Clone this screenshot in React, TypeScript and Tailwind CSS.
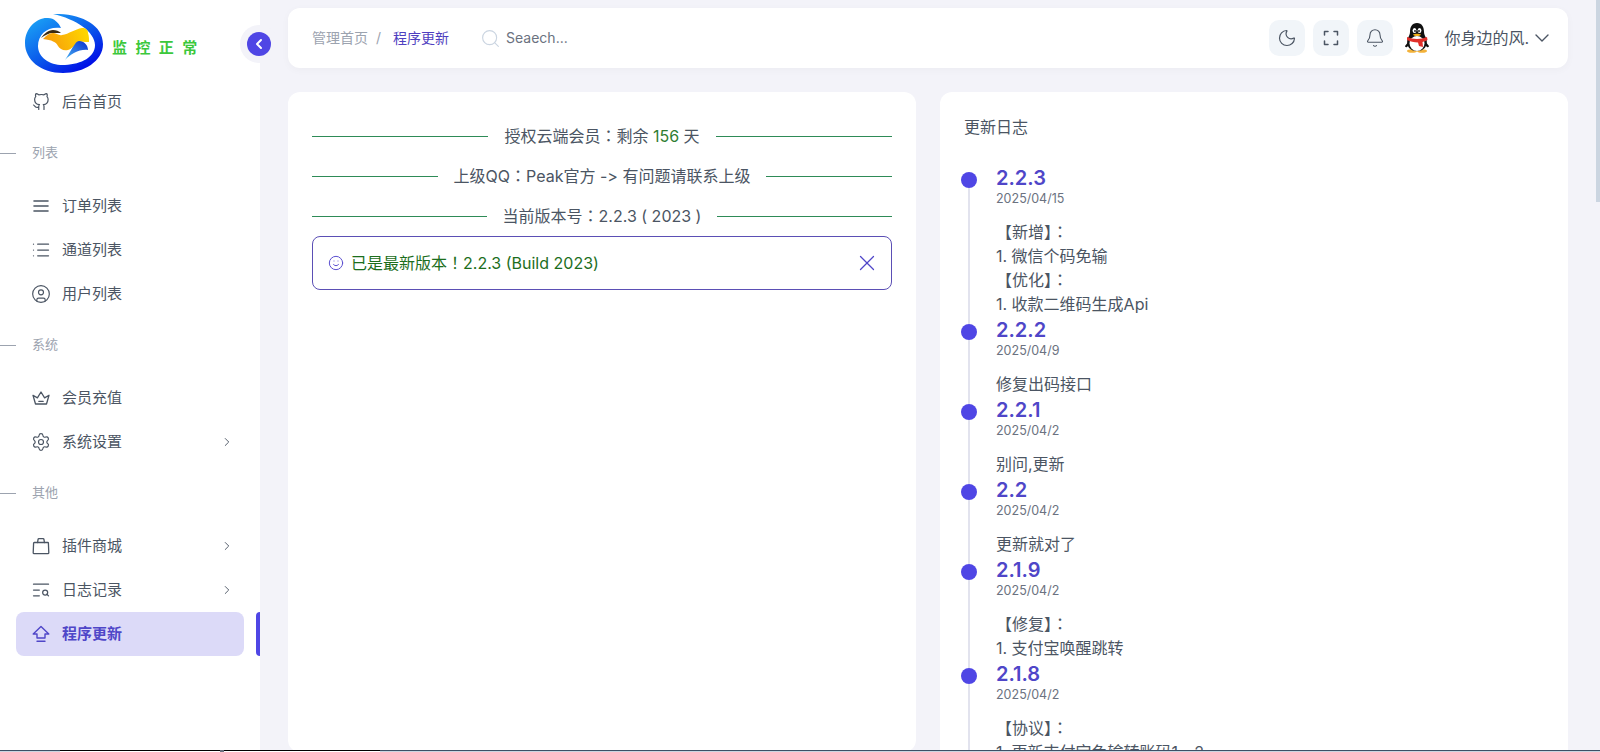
import {
  Bell,
  ChevronDown,
  ChevronLeft,
  ChevronRight,
  CircleUser,
  List,
  Moon,
  Search,
  Settings,
  Smile,
  TextSearch,
  X,
} from "lucide-react";
import type { ReactNode } from "react";

const iconProps = { fill: "none", stroke: "currentColor", strokeWidth: 1.6, strokeLinecap: "round", strokeLinejoin: "round" } as const;

function GithubIcon() {
  return (
    <svg width="18" height="18" viewBox="0 0 24 24" {...iconProps}>
      <path d="M9 19c-5 1.5-5-2.5-7-3m14 6v-3.87a3.37 3.37 0 0 0-.94-2.61c3.14-.35 6.44-1.54 6.44-7A5.44 5.44 0 0 0 20 4.77 5.07 5.07 0 0 0 19.91 1S18.73.65 16 2.48a13.38 13.38 0 0 0-7 0C6.27.65 5.09 1 5.09 1A5.07 5.07 0 0 0 5 4.77a5.44 5.44 0 0 0-1.5 3.78c0 5.42 3.3 6.61 6.44 7A3.37 3.37 0 0 0 9 18.13V22" />
    </svg>
  );
}

function LinesIcon() {
  return (
    <svg width="18" height="18" viewBox="0 0 18 18" {...iconProps}>
      <path d="M2 4h14M2 9h14M2 14h14" />
    </svg>
  );
}

function CrownIcon() {
  return (
    <svg width="18" height="18" viewBox="0 0 18 18" {...iconProps} strokeWidth={1.3}>
      <path d="M3.500 15 1 6.300l4.400 2.600L9 3l3.600 5.900L17 6.300 14.500 15Z" />
      <path d="M6.800 12.300h4.400" />
    </svg>
  );
}

function BagIcon() {
  return (
    <svg width="18" height="18" viewBox="0 0 18 18" {...iconProps} strokeWidth={1.3}>
      <path d="M2.200 5.500h13.600a.6.6 0 0 1 .6.6l.4 9.600a.9.9 0 0 1-.9.9H2.100a.9.9 0 0 1-.9-.9l.4-9.600a.6.6 0 0 1 .6-.6Z" />
      <path d="M5.600 5.500 6 2.600a1 1 0 0 1 1-.9h4a1 1 0 0 1 1 .9l.4 2.900" />
    </svg>
  );
}

function UpdateIcon() {
  return (
    <svg width="18" height="18" viewBox="0 0 18 18" {...iconProps} strokeWidth={1.4}>
      <path d="M9 1.500 1.200 9h3.800v4h8V9h3.800Z" />
      <path d="M5 16.200h8" />
    </svg>
  );
}

function FullscreenIcon() {
  return (
    <svg width="16" height="16" viewBox="0 0 16 16" {...iconProps} strokeWidth={1.5}>
      <path d="M1.500 5V1.500H5M11 1.500h3.500V5M14.500 11v3.500H11M5 14.500H1.500V11" />
    </svg>
  );
}

function Logo() {
  return (
    <svg width="80" height="59" viewBox="0 0 80 59">
      <defs>
        <linearGradient id="logoRing" x1="0.1" y1="0.1" x2="0.8" y2="0.95">
          <stop offset="0" stopColor="#1aa0f5" />
          <stop offset="0.55" stopColor="#0a55ea" />
          <stop offset="1" stopColor="#0008e6" />
        </linearGradient>
        <linearGradient id="logoYellow" x1="0" y1="0.5" x2="1" y2="0.3">
          <stop offset="0" stopColor="#f69a0c" />
          <stop offset="1" stopColor="#ffd800" />
        </linearGradient>
        <linearGradient id="logoTail" x1="1" y1="0" x2="0" y2="1">
          <stop offset="0" stopColor="#0b2fd0" />
          <stop offset="1" stopColor="#45b4f5" />
        </linearGradient>
      </defs>
      <path
        d="M29 0C55-1 79 10 79 30 79 47 60 59 39 59 17 59 1 46 1 29 1 13 14 3 24 4c6 0 11 5 13 10C24 12 14 20 14 32c0 12 13 20 27 19 17-1 30-8 30-20C71 18 52 5 29 0Z"
        fill="url(#logoRing)"
      />
      <path d="M17 24c3-4 7-8 12-8 3 0 6 1 8 3-3 0-5 0-8 0-4 0-8 2-12 5Z" fill="#3a2a12" />
      <path
        d="M19 25c3-3 6-6 10-6 3 0 6 3 9 2 7-1 13-6 20-7 4 0 6 2 6 5 1 3 1 6 1 9-4 0-8-1-11 1-4 2-6 6-10 7-5 1-8-1-10-4-2-4-6-6-15-7Z"
        fill="url(#logoYellow)"
      />
      <path d="M55 27c5 0 9 4 9 9-9-1-17 4-23 10 4-6 7-12 10-16 1-2 3-3 4-3Z" fill="url(#logoTail)" />
    </svg>
  );
}

function Penguin() {
  return (
    <svg width="26" height="30" viewBox="0 0 26 30">
      <ellipse cx="8" cy="28" rx="5" ry="1.800" fill="#f3b23a" />
      <ellipse cx="18" cy="28" rx="5" ry="1.800" fill="#f3b23a" />
      <path d="M5 18 1 23c0 1 1 1.500 2 1l3-3ZM21 18l4 5c0 1-1 1.500-2 1l-3-3Z" fill="#111" />
      <path d="M13 0c5 0 7 4 7 9 0 2 1 4 2 6 2 4 1 13-9 13S2 19 4 15c1-2 2-4 2-6 0-5 2-9 7-9Z" fill="#111" />
      <ellipse cx="13" cy="20.500" rx="7.500" ry="7.500" fill="#fff" />
      <ellipse cx="10.500" cy="7.500" rx="1.900" ry="2.600" fill="#fff" />
      <ellipse cx="15.500" cy="7.500" rx="1.900" ry="2.600" fill="#fff" />
      <circle cx="11" cy="8" r="0.900" fill="#111" />
      <circle cx="15" cy="8" r="0.900" fill="#111" />
      <path d="M9 11.500c2-1 6-1 8 0-1 2-7 2-8 0Z" fill="#f6b21a" />
      <path d="M3 14c6 2.500 14 2.500 20 0l.500 3c-2 1-3 1.500-5 2l.500 5-4-1-1-3.500c-4 0-8-1-11-2.500Z" fill="#e0302a" />
    </svg>
  );
}

// full-width punctuation sits centred in the reference, the TC face draws it that way
function Cjk({ text }: { text: string }) {
  return (
    <>
      {text.split(/([：！])/).map((part, i) =>
        i % 2 === 1 ? (
          <span key={i} className="font-['Noto_Sans_CJK_TC',sans-serif] leading-none">
            {part}
          </span>
        ) : (
          part
        ),
      )}
    </>
  );
}

function NavItem({ icon, label, arrow, active }: { icon: ReactNode; label: string; arrow?: boolean; active?: boolean }) {
  return (
    <div className="flex h-11 items-center pl-4">
      <div
        className={`flex h-11 w-[228px] items-center rounded-lg pl-4 pr-[10px] ${
          active ? "bg-[#dcdaf8] text-[#4f46c8] font-semibold" : "text-[#4b5563]"
        }`}
      >
        <span className="flex w-[18px] justify-center">{icon}</span>
        <span className="ml-3 flex-1 text-[15px]">{label}</span>
        {arrow && <ChevronRight size={14} strokeWidth={1.6} className="text-[#4b5563]" />}
      </div>
      {active && <div className="ml-3 h-11 w-1 rounded-l bg-[#4f46e5]" />}
    </div>
  );
}

function NavTitle({ label }: { label: string }) {
  return (
    <div className="mb-[21px] mt-[19px] flex h-5 items-center text-[13px] text-[#9ca3af]">
      <span className="h-px w-4 bg-[#9ca3af]" />
      <span className="ml-4">{label}</span>
    </div>
  );
}

function Divider({ children }: { children: ReactNode }) {
  return (
    <div className="flex h-6 items-center gap-4 text-base leading-6 text-[#4b5563] [font-feature-settings:'calt'_0]">
      <span className="h-px flex-1 bg-[#2e8b57]" />
      <span>{children}</span>
      <span className="h-px flex-1 bg-[#2e8b57]" />
    </div>
  );
}

function TopButton({ children }: { children: ReactNode }) {
  return <div className="flex h-9 w-9 items-center justify-center rounded-[10px] bg-[#f1f5f9] text-[#4b5563]">{children}</div>;
}

const logs = [
  { version: "2.2.3", date: "2025/04/15", body: ["【新增】：", "1. 微信个码免输", "【优化】：", "1. 收款二维码生成Api"] },
  { version: "2.2.2", date: "2025/04/9", body: ["修复出码接口"] },
  { version: "2.2.1", date: "2025/04/2", body: ["别问,更新"] },
  { version: "2.2", date: "2025/04/2", body: ["更新就对了"] },
  { version: "2.1.9", date: "2025/04/2", body: ["【修复】：", "1. 支付宝唤醒跳转"] },
  { version: "2.1.8", date: "2025/04/2", body: ["【协议】：", "1. 更新支付宝免输转账码1、2"] },
];

export default function App() {
  return (
    <div className="relative flex h-[752px] w-[1600px] overflow-hidden bg-[#f3f3f9] font-['Inter','Noto_Sans_CJK_SC',sans-serif]">
      <aside className="relative flex w-[260px] shrink-0 flex-col bg-white">
        <div className="flex h-20 items-start pl-6 pt-3.5">
          <Logo />
          <span className="ml-2 mt-[24px] whitespace-nowrap text-[15px] font-bold leading-5 tracking-[8.4px] text-[#3cc83c]">监控正常</span>
        </div>
        <NavItem icon={<GithubIcon />} label="后台首页" />
        <NavTitle label="列表" />
        <NavItem icon={<LinesIcon />} label="订单列表" />
        <NavItem icon={<List size={20} strokeWidth={1.5} className="shrink-0" />} label="通道列表" />
        <NavItem icon={<CircleUser size={20} strokeWidth={1.4} className="shrink-0" />} label="用户列表" />
        <NavTitle label="系统" />
        <NavItem icon={<CrownIcon />} label="会员充值" />
        <NavItem icon={<Settings size={20} strokeWidth={1.4} className="shrink-0" />} label="系统设置" arrow />
        <NavTitle label="其他" />
        <NavItem icon={<BagIcon />} label="插件商城" arrow />
        <NavItem icon={<TextSearch size={20} strokeWidth={1.5} className="shrink-0" />} label="日志记录" arrow />
        <NavItem icon={<UpdateIcon />} label="程序更新" active />
      </aside>

      {/* collapse toggle sits over the sidebar edge */}
      <div className="absolute left-[240px] top-[25px] flex h-[38px] w-[38px] items-center justify-center rounded-full bg-[#f3f3f9]">
        <div className="flex h-6 w-6 items-center justify-center rounded-full bg-[#4f46e5] text-white">
          <ChevronLeft size={16} strokeWidth={3} />
        </div>
      </div>

      <main className="flex min-w-0 flex-1 flex-col pl-7 pr-8 pt-2">
        <header className="flex h-[60px] shrink-0 items-center rounded-xl bg-white pl-6 pr-[14px] shadow-[0_2px_8px_rgba(15,23,42,0.03)]">
          <span className="text-sm text-[#9ca3af]">管理首页</span>
          <span className="ml-2 text-sm text-[#9ca3af]">/</span>
          <span className="ml-[12px] text-sm text-[#4f3fc0]">程序更新</span>
          <Search size={21} strokeWidth={1.3} className="ml-[31px] text-[#cbd5e1]" />
          <span className="ml-[5px] text-sm text-[#6b7280]">Seaech...</span>
          <div className="ml-auto flex items-center gap-2">
            <TopButton>
              <Moon size={20} strokeWidth={1.4} />
            </TopButton>
            <TopButton>
              <FullscreenIcon />
            </TopButton>
            <TopButton>
              <Bell size={20} strokeWidth={1.3} />
            </TopButton>
            <div className="ml-[3px] flex items-center">
              <Penguin />
              <span className="ml-[14px] whitespace-nowrap text-base text-[#4b5563]">你身边的风.</span>
              <ChevronDown size={24} strokeWidth={1.4} className="ml-px text-[#4b5563]" />
            </div>
          </div>
        </header>

        <div className="mt-6 flex min-h-0 flex-1 gap-6">
          <section className="w-[628px] shrink-0 rounded-xl bg-white px-6 pt-8">
            <div className="flex flex-col gap-4">
              <Divider>
                <Cjk text="授权云端会员：剩余 " />
                <span className="text-[#2f7d32]">156</span> 天
              </Divider>
              <Divider>
                <Cjk text="上级QQ：Peak官方 -> 有问题请联系上级" />
              </Divider>
              <Divider>
                <Cjk text="当前版本号：2.2.3 ( 2023 )" />
              </Divider>
            </div>
            <div className="mt-2 flex h-[54px] items-center rounded-lg border border-[#5b4fb5] pl-[15px] pr-[11px]">
              <Smile size={16} strokeWidth={1.5} className="text-[#5b4fd0]" />
              <span className="ml-[7px] flex-1 text-base leading-6 text-[#1c6e1c]">
                <Cjk text="已是最新版本！2.2.3 (Build 2023)" />
              </span>
              <X size={26} strokeWidth={1.2} className="text-[#4f46c8]" />
            </div>
          </section>

          <section className="min-w-0 flex-1 overflow-hidden rounded-t-xl bg-white px-6">
            <h2 className="mt-[25px] text-base font-normal leading-5 text-[#4b5563]">更新日志</h2>
            <div className="-ml-[3px] mt-[27px]">
              {logs.map((log, i) => (
                <div key={log.version} className="flex">
                  <div className="flex w-4 shrink-0 flex-col items-center">
                    <span className={`h-2 w-0.5 ${i === 0 ? "" : "bg-[#e2e3ee]"}`} />
                    <span className="h-4 w-4 rounded-full bg-[#4f46e5]" />
                    <span className="w-0.5 flex-1 bg-[#e2e3ee]" />
                  </div>
                  <div className="ml-[19px]">
                    <div className="text-xl font-semibold leading-7 text-[#4f46c8]">{log.version}</div>
                    <div className="mb-[14px] text-[12.5px] leading-[14px] text-[#6b7280]">{log.date}</div>
                    {log.body.map((line, j) => (
                      <div key={j} className="text-base leading-6 text-[#4b5563]">
                        <Cjk text={line} />
                      </div>
                    ))}
                  </div>
                </div>
              ))}
            </div>
          </section>
        </div>
      </main>

      {/* browser scrollbar thumb and the sliver of window chrome along the bottom */}
      <div className="absolute right-0 top-0 h-[202px] w-1 bg-[#cbd5e1]" />
      <div className="absolute bottom-0 left-0 flex h-0.5 w-full">
        <div className="w-[60px] border-t border-[#3d5066] bg-[#cbd5e1]" />
        <div className="w-[160px] border-t border-black bg-white" />
        <div className="w-[4px] bg-[#6b7280]" />
        <div className="w-[156px] border-t border-black bg-white" />
        <div className="flex-1 border-t border-[#3d5066] bg-[#cbd5e1]" />
      </div>
    </div>
  );
}
